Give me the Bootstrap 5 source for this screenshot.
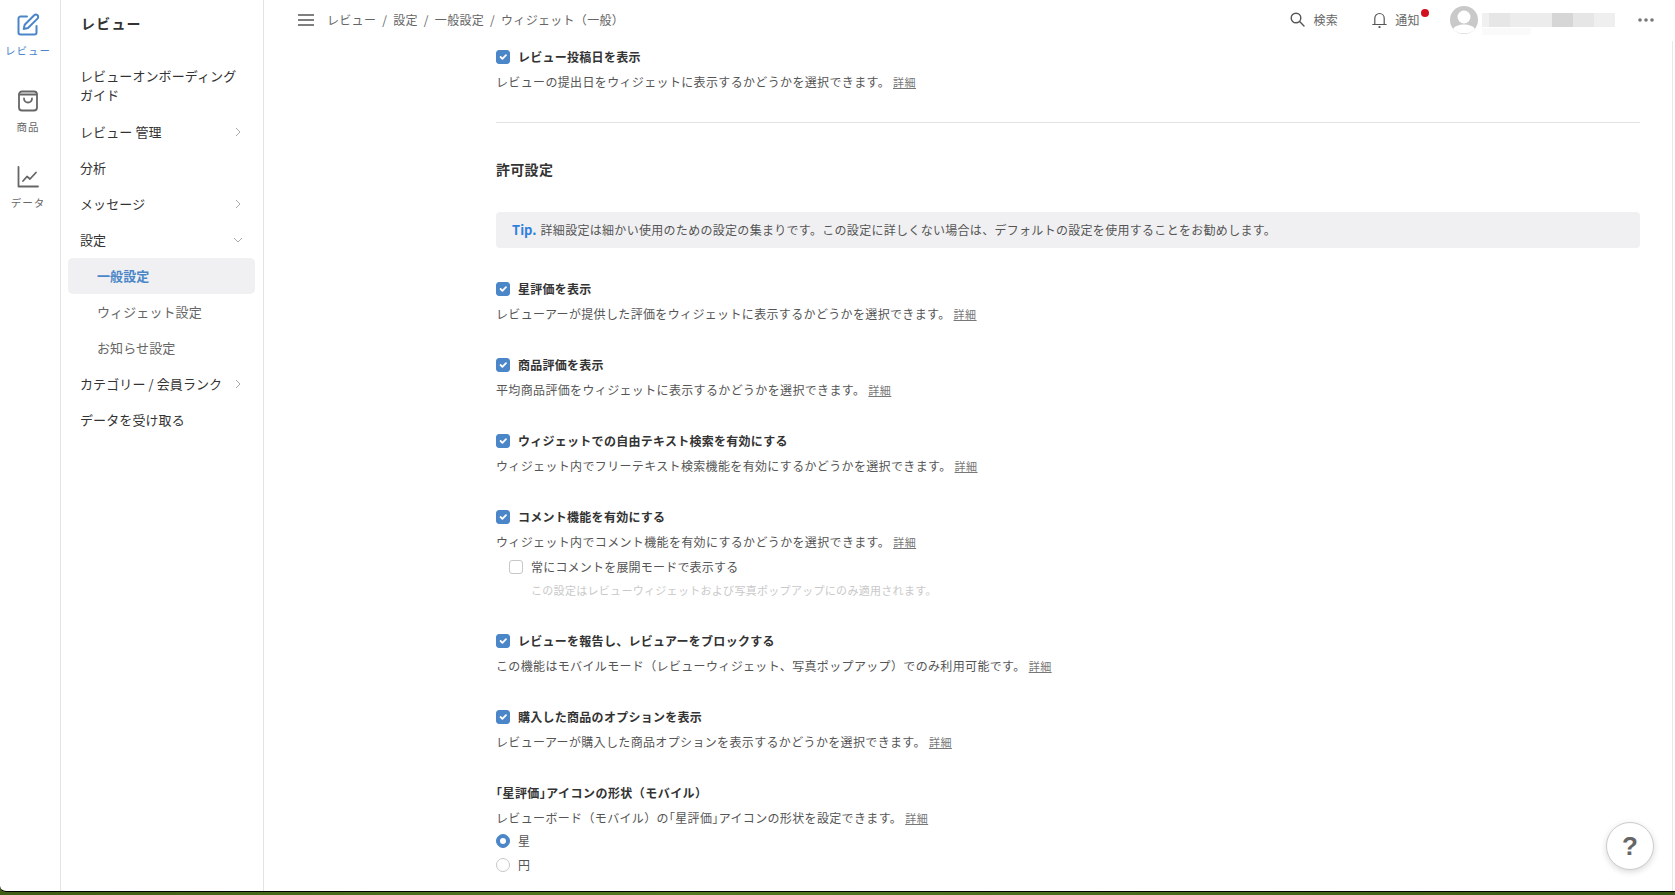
<!DOCTYPE html>
<html lang="ja">
<head>
    <meta charset="utf-8">
    <title>ウィジェット（一般）</title>
    <link href="https://cdn.jsdelivr.net/npm/bootstrap@5.3.0/dist/css/bootstrap.min.css" rel="stylesheet">
    <script src="https://cdn.jsdelivr.net/npm/bootstrap@5.3.0/dist/js/bootstrap.bundle.min.js"></script>
    <style>
        html, body { height: 100%; overflow: hidden; }
        body { background: linear-gradient(90deg, #3f5c14, #557a22 40%, #3c5a14); font-family: "Noto Sans CJK JP", "Liberation Sans", sans-serif; color: #333; font-size: 12px; }
        .app-frame { height: 892px; background: #fff; border-bottom: 1px solid #000; border-bottom-left-radius: 6px; overflow: hidden; }
        .tight { font-feature-settings: "halt"; }

        .rail { width: 61px; border-right: 1px solid #e4e4e4; flex-shrink: 0; padding: 13px 4px 0 0; }
        .rail-item { height: 76px; color: #666; font-size: 10.5px; letter-spacing: 1px; line-height: 14px; }
        .rail-item svg { display: block; margin-bottom: 7px; }
        .rail-item.on { color: #4a86c8; }

        .side { width: 203px; border-right: 1px solid #e4e4e4; flex-shrink: 0; }
        .side-title { font-size: 14px; font-weight: 700; letter-spacing: 1.2px; line-height: 20px; padding: 13px 0 0 20px; height: 66px; color: #333; }
        .side-link { display: flex; align-items: center; justify-content: space-between; height: 36px; padding: 0 14px 0 12px; margin: 0 8px 0 7px; font-size: 13px; letter-spacing: .1px; color: #333; text-decoration: none; white-space: nowrap; border-radius: 5px; }
        .side-link.tall { height: 37px; line-height: 19px; display: block; margin-bottom: 11px; }
        .side-link.sub { padding-left: 29px; color: #666; }
        .side-link.on { background: #f0f0f2; color: #4a86c8; font-weight: 700; }
        .side-link svg { flex-shrink: 0; }
        .side-link svg.down { margin-right: -2px; }

        .top { height: 41px; padding: 0 21px 2px 34px; flex-shrink: 0; color: #666; }
        .top .crumbs { margin: 0 0 0 13px; font-size: 12px; letter-spacing: .3px; --bs-breadcrumb-item-padding-x: 6px; --bs-breadcrumb-margin-bottom: 0; }
        .top .breadcrumb-item, .top .breadcrumb-item.active { color: #666; }
        .top .breadcrumb-item + .breadcrumb-item::before { color: #666; }
        .top-tool { position: relative; font-size: 12px; letter-spacing: .4px; color: #666; }
        .tool-find { margin-right: 34px; }
        .tool-bell { margin-right: 30px; }
        .tool-user { margin-right: 23px; }
        .red-dot { position: absolute; top: -2px; right: -9px; width: 8px; height: 8px; background: #d0121f; border-radius: 50%; }

        .pane { flex: 1; min-width: 0; position: relative; }
        .scroll-area { flex: 1; margin-right: 2px; border-right: 1px solid #e8e8e8; padding: 6px 32px 0 232px; overflow: hidden; }

        .opt { margin-bottom: 31px; }
        .opt-head { min-height: 20px; margin: 0; padding: 0; display: flex; align-items: center; gap: 8px; font-weight: 700; letter-spacing: .27px; color: #333; }
        .opt-head.wide-head { letter-spacing: .45px; }
        .opt-head .form-check-input, .opt-sub .form-check-input, .radio-row .form-check-input { width: 14px; height: 14px; margin: 0; float: none; flex-shrink: 0; border: 1.5px solid #c8c8c8; }
        .opt-head .form-check-input:checked, .radio-row .form-check-input:checked { background-color: #4a86c8; border-color: #4a86c8; }
        .form-check-input[type=checkbox] { border-radius: 3px; }
        .opt-desc { margin: 5px 0 0; line-height: 20px; letter-spacing: .35px; color: #555; }
        .opt-desc a { font-size: 11px; letter-spacing: .5px; color: #777; }
        .opt-sub { margin: 5px 0 0 13px; min-height: 20px; padding: 0; display: flex; align-items: center; gap: 8px; color: #555; letter-spacing: .2px; }
        .opt-note { margin: 3px 0 0 35px; font-size: 11px; line-height: 20px; letter-spacing: .3px; color: #c9c9c9; }
        .radio-row { margin: 2px 0 0; min-height: 22px; padding: 0; display: flex; align-items: center; gap: 8px; color: #555; }

        .split { margin: 30px 0 34px; border-color: #e2e2e2; opacity: 1; }
        .section-title { font-size: 14px; font-weight: 700; line-height: 24px; letter-spacing: .3px; color: #333; margin: 0 0 31px; }
        .tip-box { background: #f0f0f2; border: 0; border-radius: 4px; height: 36px; padding: 0 16px; margin-bottom: 31px; letter-spacing: .3px; color: #555; }
        .tip-box b { color: #2f80dd; font-size: 13px; margin-right: 4px; letter-spacing: 0; }

        .help-btn { position: absolute; right: 21px; bottom: 21px; width: 48px; height: 48px; padding: 0; background: #fff; border: 1px solid #ccc; border-radius: 50%; box-shadow: 0 2px 6px rgba(0,0,0,.15); color: #666; font-family: "Liberation Sans", sans-serif; font-size: 26px; font-weight: 700; line-height: 1; }
    </style>
</head>
<body>
<div class="app-frame d-flex">
    <!-- icon rail -->
    <div class="rail">
        <div class="rail-item on d-flex flex-column align-items-center">
            <svg width="24" height="24" viewBox="0 0 24 24" fill="none" stroke="#4a86c8" stroke-width="2" stroke-linecap="round" stroke-linejoin="round"><path d="M11 3.500H4.500a2 2 0 0 0-2 2V19.500a2 2 0 0 0 2 2H18.500a2 2 0 0 0 2-2V13"/><path d="M18.200 2.300a2.300 2.300 0 0 1 3.300 3.300L12 15l-4.300 1 1-4.300z"/></svg>
            <span>レビュー</span>
        </div>
        <div class="rail-item d-flex flex-column align-items-center">
            <svg width="24" height="24" viewBox="0 0 24 24" fill="none" stroke="#666" stroke-width="1.8" stroke-linecap="round" stroke-linejoin="round"><path d="M6 2.500h12a3 3 0 0 1 3 3v13a3 3 0 0 1-3 3H6a3 3 0 0 1-3-3v-13a3 3 0 0 1 3-3z"/><path d="M3.500 5.500h17"/><path d="M8 9.500a4 4 0 0 0 8 0"/></svg>
            <span>商品</span>
        </div>
        <div class="rail-item d-flex flex-column align-items-center">
            <svg width="24" height="24" viewBox="0 0 24 24" fill="none" stroke="#666" stroke-width="1.8" stroke-linecap="round" stroke-linejoin="round"><path d="M2.500 2v19.500H22"/><path d="M7 16l4-4.500 3 2.500 6-6.500"/></svg>
            <span>データ</span>
        </div>
    </div>

    <!-- section menu -->
    <div class="side">
        <div class="side-title">レビュー</div>
        <a class="side-link tall" href="#">レビューオンボーディング<br>ガイド</a>
        <a class="side-link" href="#">レビュー 管理 <svg width="6" height="10" viewBox="0 0 6 10" fill="none" stroke="#aaa"><path d="M1 1l4 4-4 4"/></svg></a>
        <a class="side-link" href="#">分析</a>
        <a class="side-link" href="#">メッセージ <svg width="6" height="10" viewBox="0 0 6 10" fill="none" stroke="#aaa"><path d="M1 1l4 4-4 4"/></svg></a>
        <a class="side-link" href="#">設定 <svg width="10" height="6" viewBox="0 0 10 6" fill="none" stroke="#aaa" class="down"><path d="M1 1l4 4 4-4"/></svg></a>
        <a class="side-link sub on" href="#">一般設定</a>
        <a class="side-link sub" href="#">ウィジェット設定</a>
        <a class="side-link sub" href="#">お知らせ設定</a>
        <a class="side-link" href="#">カテゴリー / 会員ランク <svg width="6" height="10" viewBox="0 0 6 10" fill="none" stroke="#aaa"><path d="M1 1l4 4-4 4"/></svg></a>
        <a class="side-link" href="#">データを受け取る</a>
    </div>

    <div class="pane d-flex flex-column">
        <!-- top bar -->
        <div class="top d-flex align-items-center">
            <svg width="16" height="12" viewBox="0 0 16 12" stroke="#555" stroke-width="1.4"><path d="M0 1h16M0 6h16M0 11h16"/></svg>
            <ol class="breadcrumb crumbs">
                <li class="breadcrumb-item">レビュー</li>
                <li class="breadcrumb-item">設定</li>
                <li class="breadcrumb-item">一般設定</li>
                <li class="breadcrumb-item active">ウィジェット（一般）</li>
            </ol>
            <div class="ms-auto d-flex align-items-center">
                <div class="top-tool tool-find d-flex align-items-center gap-2">
                    <svg width="15" height="15" viewBox="0 0 15 15" fill="none" stroke="#555" stroke-width="1.4" stroke-linecap="round"><circle cx="6" cy="6" r="4.800"/><path d="M9.600 9.600l4.400 4.400"/></svg>
                    <span>検索</span>
                </div>
                <div class="top-tool tool-bell d-flex align-items-center gap-2">
                    <svg width="15" height="16" viewBox="0 0 15 16" fill="none" stroke="#555" stroke-width="1.2" stroke-linecap="round"><path d="M.8 12.500h13.400M2.800 12.500V6.200a4.700 4.700 0 0 1 9.400 0v6.300"/><circle cx="7.500" cy="15" r=".5"/></svg>
                    <span class="position-relative">通知<i class="red-dot"></i></span>
                </div>
                <svg width="165" height="30" viewBox="0 0 165 30" class="tool-user">
                    <circle cx="14" cy="15" r="14" fill="#c9c9c9"/>
                    <circle cx="14" cy="12" r="6.500" fill="#fff"/>
                    <path d="M3 24c3-6 19-6 22 0-5 6-17 6-22 0z" fill="#fff"/>
                    <g fill="#e6e6e6">
                        <rect x="32" y="8" width="7" height="14" fill="#f0f0f0"/>
                        <rect x="39" y="8" width="21" height="14"/>
                        <rect x="60" y="8" width="42" height="14" fill="#ececec"/>
                        <rect x="102" y="8" width="21" height="14" fill="#d6d6d6"/>
                        <rect x="123" y="8" width="21" height="14"/>
                        <rect x="144" y="8" width="21" height="14" fill="#efefef"/>
                        <rect x="32" y="23" width="49" height="7" fill="#fafafa"/>
                    </g>
                </svg>
                <svg width="16" height="4" viewBox="0 0 16 4" fill="#777"><circle cx="2" cy="2" r="1.800"/><circle cx="8" cy="2" r="1.800"/><circle cx="14" cy="2" r="1.800"/></svg>
            </div>
        </div>

        <!-- settings -->
        <div class="scroll-area">
            <div class="form-check opt-head"><input class="form-check-input" type="checkbox" checked> レビュー投稿日を表示</div>
            <p class="opt-desc">レビューの提出日をウィジェットに表示するかどうかを選択できます。 <a href="#">詳細</a></p>
            <hr class="split">
            <h2 class="section-title">許可設定</h2>
            <div class="alert tip-box d-flex align-items-center"><b>Tip.</b> 詳細設定は細かい使用のための設定の集まりです。この設定に詳しくない場合は、デフォルトの設定を使用することをお勧めします。</div>

            <div class="opt">
                <div class="form-check opt-head"><input class="form-check-input" type="checkbox" checked> 星評価を表示</div>
                <p class="opt-desc">レビューアーが提供した評価をウィジェットに表示するかどうかを選択できます。 <a href="#">詳細</a></p>
            </div>
            <div class="opt">
                <div class="form-check opt-head"><input class="form-check-input" type="checkbox" checked> 商品評価を表示</div>
                <p class="opt-desc">平均商品評価をウィジェットに表示するかどうかを選択できます。 <a href="#">詳細</a></p>
            </div>
            <div class="opt">
                <div class="form-check opt-head"><input class="form-check-input" type="checkbox" checked> ウィジェットでの自由テキスト検索を有効にする</div>
                <p class="opt-desc">ウィジェット内でフリーテキスト検索機能を有効にするかどうかを選択できます。 <a href="#">詳細</a></p>
            </div>
            <div class="opt">
                <div class="form-check opt-head"><input class="form-check-input" type="checkbox" checked> コメント機能を有効にする</div>
                <p class="opt-desc">ウィジェット内でコメント機能を有効にするかどうかを選択できます。 <a href="#">詳細</a></p>
                <div class="form-check opt-sub"><input class="form-check-input" type="checkbox"> 常にコメントを展開モードで表示する</div>
                <p class="opt-note">この設定はレビューウィジェットおよび写真ポップアップにのみ適用されます。</p>
            </div>
            <div class="opt">
                <div class="form-check opt-head"><input class="form-check-input" type="checkbox" checked> レビューを報告し、レビュアーをブロックする</div>
                <p class="opt-desc">この機能はモバイルモード（レビューウィジェット、写真ポップアップ）でのみ利用可能です。 <a href="#">詳細</a></p>
            </div>
            <div class="opt">
                <div class="form-check opt-head"><input class="form-check-input" type="checkbox" checked> 購入した商品のオプションを表示</div>
                <p class="opt-desc">レビューアーが購入した商品オプションを表示するかどうかを選択できます。 <a href="#">詳細</a></p>
            </div>
            <div class="opt">
                <div class="opt-head wide-head"><span><span class="tight">「</span>星評価<span class="tight">」</span>アイコンの形状（モバイル）</span></div>
                <p class="opt-desc">レビューボード（モバイル）の<span class="tight">「</span>星評価<span class="tight">」</span>アイコンの形状を設定できます。 <a href="#">詳細</a></p>
                <div class="form-check radio-row"><input class="form-check-input" type="radio" name="shape" checked> 星</div>
                <div class="form-check radio-row"><input class="form-check-input" type="radio" name="shape"> 円</div>
            </div>
        </div>
        <button class="btn help-btn" type="button">?</button>
    </div>
</div>
</body>
</html>
